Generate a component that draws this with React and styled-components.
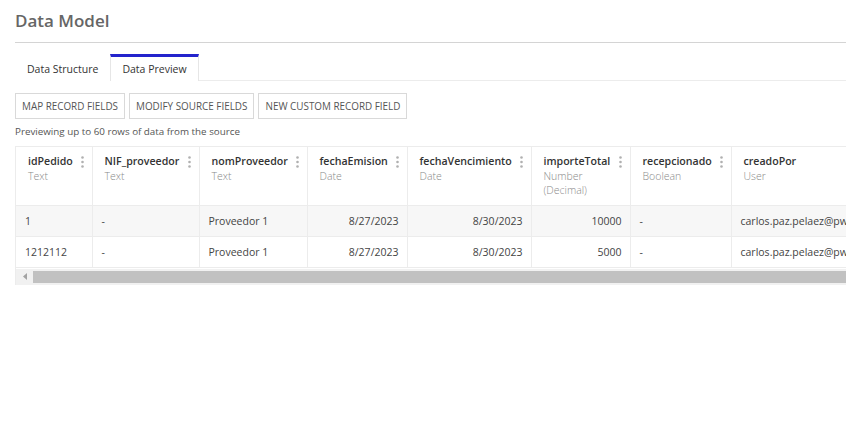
import React from 'react';
import styled, { createGlobalStyle } from 'styled-components';

const GlobalStyle = createGlobalStyle`
  html, body {
    margin: 0;
    padding: 0;
    background: #fff;
    overflow: hidden;
  }
  body {
    font-family: "Open Sans", "Liberation Sans", sans-serif;
    color: #333;
  }
`;

const Page = styled.div`
  padding: 9px 0 0 15px;
  width: 1100px;
`;

const Title = styled.h1`
  margin: 0;
  font-size: 17px;
  font-weight: 600;
  color: #666;
  line-height: 24px;
  padding-bottom: 9px;
  border-bottom: 1px solid #d4d4d4;
  width: 831px;
`;

const TabBar = styled.div`
  display: flex;
  margin-top: 11px;
  border-bottom: 1px solid #ececec;
  width: 831px;
`;

const Tab = styled.div`
  font-size: 10.5px;
  color: #333;
  height: 24px;
  line-height: 25px;
  padding: 0 11px;
  border-top: 3px solid ${p => (p.$active ? '#2323cc' : 'transparent')};
  border-left: 1px solid ${p => (p.$active ? '#e6e6e6' : 'transparent')};
  border-right: 1px solid ${p => (p.$active ? '#e6e6e6' : 'transparent')};
  margin-bottom: -1px;
  background: #fff;
`;

const Toolbar = styled.div`
  display: flex;
  gap: 4px;
  margin-top: 12px;
`;

const ActionButton = styled.button`
  font-family: inherit;
  font-size: 9.9px;
  color: #555;
  background: #fff;
  border: 1px solid #d9d9d9;
  height: 26px;
  padding: 0 6px;
  text-transform: uppercase;
  cursor: pointer;
`;

const Caption = styled.div`
  font-size: 9.8px;
  color: #555;
  margin-top: 6px;
  line-height: 14px;
`;

const TableWrap = styled.div`
  margin-top: 7px;
  border-top: 1px solid #ececec;
  border-left: 1px solid #ececec;
`;

const Table = styled.table`
  border-collapse: collapse;
  table-layout: fixed;
  width: 1000px;
`;

const HeadCell = styled.th`
  height: 58px;
  padding: 7px 8px 0 12px;
  text-align: left;
  vertical-align: top;
  border-right: 1px solid #ececec;
  border-bottom: 1px solid #ececec;
  font-weight: 400;
  box-sizing: border-box;
`;

const HeadTop = styled.div`
  display: flex;
  align-items: center;
  justify-content: space-between;
`;

const FieldName = styled.span`
  font-size: 10.6px;
  font-weight: 600;
  color: #333;
  line-height: 15px;
`;

const FieldType = styled.div`
  font-size: 10.5px;
  color: #8a8a8a;
  line-height: 14px;
  font-weight: 300;
`;

const Row = styled.tr`
  background: ${p => (p.$shade ? '#f7f7f7' : '#fff')};
`;

const Cell = styled.td`
  height: 31px;
  padding: 0 8px 0 9px;
  font-size: 10.5px;
  color: #444;
  text-align: ${p => (p.$right ? 'right' : 'left')};
  border-right: 1px solid #ececec;
  border-bottom: 1px solid #ececec;
  white-space: nowrap;
  overflow: hidden;
  box-sizing: border-box;
`;

const ScrollTrack = styled.div`
  display: flex;
  align-items: center;
  height: 16px;
  margin-top: 1px;
  background: #f1f1f1;
  width: 1000px;
`;

const ScrollArrow = styled.div`
  width: 17px;
  display: flex;
  justify-content: center;
`;

const ScrollThumb = styled.div`
  flex: 1;
  height: 12px;
  background: #c1c1c1;
`;

const Kebab = () => (
  <svg width="3" height="12" viewBox="0 0 3 12">
    <circle cx="1.5" cy="1.5" r="1.3" fill="#b0b0b0" />
    <circle cx="1.5" cy="6" r="1.3" fill="#b0b0b0" />
    <circle cx="1.5" cy="10.5" r="1.3" fill="#b0b0b0" />
  </svg>
);

const columns = [
  { name: 'idPedido', type: 'Text', w: 76 },
  { name: 'NIF_proveedor', type: 'Text', w: 107 },
  { name: 'nomProveedor', type: 'Text', w: 108 },
  { name: 'fechaEmision', type: 'Date', w: 100 },
  { name: 'fechaVencimiento', type: 'Date', w: 124 },
  { name: 'importeTotal', type: 'Number\n(Decimal)', w: 99 },
  { name: 'recepcionado', type: 'Boolean', w: 101 },
  { name: 'creadoPor', type: 'User', w: 285, noMenu: true },
];

const rows = [
  ['1', '-', 'Proveedor 1', '8/27/2023', '8/30/2023', '10000', '-', 'carlos.paz.pelaez@pwc.com'],
  ['1212112', '-', 'Proveedor 1', '8/27/2023', '8/30/2023', '5000', '-', 'carlos.paz.pelaez@pwc.com'],
];

const rightAligned = [3, 4, 5];

export default function App() {
  return (
    <>
      <GlobalStyle />
      <Page>
        <Title>Data Model</Title>
        <TabBar>
          <Tab>Data Structure</Tab>
          <Tab $active>Data Preview</Tab>
        </TabBar>
        <Toolbar>
          <ActionButton>Map Record Fields</ActionButton>
          <ActionButton>Modify Source Fields</ActionButton>
          <ActionButton>New Custom Record Field</ActionButton>
        </Toolbar>
        <Caption>Previewing up to 60 rows of data from the source</Caption>
        <TableWrap>
          <Table>
            <colgroup>
              {columns.map(c => (
                <col key={c.name} style={{ width: c.w }} />
              ))}
            </colgroup>
            <thead>
              <tr>
                {columns.map(c => (
                  <HeadCell key={c.name}>
                    <HeadTop>
                      <FieldName>{c.name}</FieldName>
                      {!c.noMenu && <Kebab />}
                    </HeadTop>
                    {c.type.split('\n').map(t => (
                      <FieldType key={t}>{t}</FieldType>
                    ))}
                  </HeadCell>
                ))}
              </tr>
            </thead>
            <tbody>
              {rows.map((r, i) => (
                <Row key={i} $shade={i === 0}>
                  {r.map((v, j) => (
                    <Cell key={j} $right={rightAligned.includes(j)}>
                      {v}
                    </Cell>
                  ))}
                </Row>
              ))}
            </tbody>
          </Table>
          <ScrollTrack>
            <ScrollArrow>
              <svg width="4" height="7" viewBox="0 0 4 7">
                <path d="M4 0 L0 3.5 L4 7 Z" fill="#a3a3a3" />
              </svg>
            </ScrollArrow>
            <ScrollThumb />
          </ScrollTrack>
        </TableWrap>
      </Page>
    </>
  );
}
